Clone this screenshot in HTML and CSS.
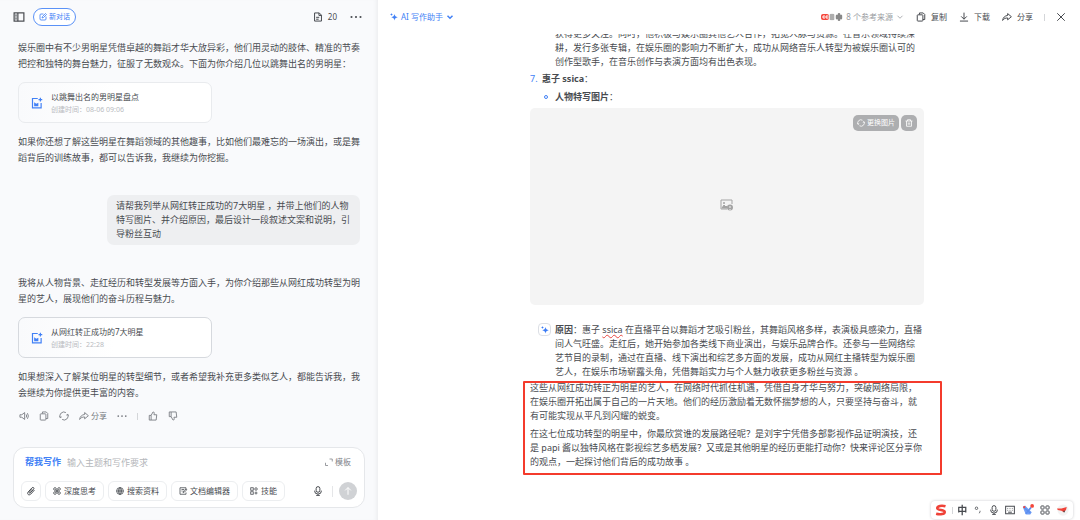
FILE: index.html
```html
<!DOCTYPE html>
<html lang="zh-CN">
<head>
<meta charset="utf-8">
<title>AI 写作助手</title>
<link rel="stylesheet" href="styles.css">
</head>
<body>
<svg class="sprite" aria-hidden="true">
  <symbol id="copy" viewBox="0 0 16 16"><rect x="2" y="4.500" width="9" height="10" rx="1"/><path d="M5.500 4V1.500h6L14 4v8h-3"/></symbol>
  <symbol id="share" viewBox="0 0 16 16"><path d="M9 2.500l6 5-6 5V9.500C5.500 9.500 3 10.500 1 13.500 1.500 9 4.500 6 9 5.500z"/></symbol>
  <symbol id="dots" viewBox="0 0 16 16"><g fill="currentColor" stroke="none"><circle cx="2" cy="8" r="1.400"/><circle cx="8" cy="8" r="1.400"/><circle cx="14" cy="8" r="1.400"/></g></symbol>
  <symbol id="refresh" viewBox="0 0 16 16"><path d="M2 10.500a6.300 6.300 0 0 1 9-8M14 5.500a6.300 6.300 0 0 1-9 8M.5 8.500l1.500 2.200 2.300-1.300M15.500 7.500L14 5.300l-2.300 1.300"/></symbol>
  <symbol id="mic" viewBox="0 0 16 16"><rect x="5" y="1" width="6" height="9" rx="3"/><path d="M2.500 7.500a5.500 5.500 0 0 0 11 0M8 13v2.500M5 15.500h6"/></symbol>
  <symbol id="down" viewBox="0 0 16 16"><path d="M3 5.500l5 5 5-5"/></symbol>
  <symbol id="sparkle" viewBox="0 0 16 16"><path fill="currentColor" stroke="none" d="M9 2c.8 4 2.200 5.400 6.500 6.500C11.200 9.500 9.800 11 9 15c-.8-4-2.200-5.500-6.500-6.500C6.800 7.400 8.200 6 9 2zM3 0c.3 1.900 1 2.600 3 3-2 .4-2.700 1.100-3 3-.3-1.900-1-2.600-3-3 2-.4 2.700-1.100 3-3z"/></symbol>
  <symbol id="docadd" viewBox="0 0 16 16"><path d="M9 2H2v12.500h11.500V8M5 11.500V8.500l2 1.500 2-1v2.500z"/><path d="M12.500 1v5M10 3.500h5"/></symbol>
</svg>
<main class="app">
  <section class="chat">
    <header class="bar">
      <button class="plain" aria-label="侧边栏"><svg class="i12" viewBox="0 0 16 16"><rect x="1.500" y="2.500" width="13" height="11"/><path d="M6.500 2.500v11M3 5.500h2M3 8h2M3 10.500h2"/></svg></button>
      <button class="new"><svg class="i8" viewBox="0 0 16 16"><path d="M9 2H4a2 2 0 0 0-2 2v8a2 2 0 0 0 2 2h8a2 2 0 0 0 2-2V7M6 10l1-3 6-6 2 2-6 6z"/></svg>新对话</button>
      <span class="grow"></span>
      <button class="plain count"><svg class="i10" viewBox="0 0 16 16"><path d="M2.500 1.500h7.500l3.500 3.500v9.500h-11zM9.500 1.500v4h4M5 8.500h5M5 11.500h4"/></svg>20</button>
      <button class="plain" aria-label="更多"><svg class="i12"><use href="#dots"/></svg></button>
    </header>
    <div class="messages">
      <p>娱乐圈中有不少男明星凭借卓越的舞蹈才华大放异彩，他们用灵动的肢体、精准的节奏<br>把控和独特的舞台魅力，征服了无数观众。下面为你介绍几位以跳舞出名的男明星：</p>
      <a class="card" href="#"><svg class="i12 blue"><use href="#docadd"/></svg><span><b>以跳舞出名的男明星盘点</b><small>创建时间：08-06 09:06</small></span></a>
      <p>如果你还想了解这些明星在舞蹈领域的其他趣事，比如他们最难忘的一场演出，或是舞<br>蹈背后的训练故事，都可以告诉我，我继续为你挖掘。</p>
      <p class="bubble">请帮我列举从网红转正成功的7大明星 ，并带上他们的人物<br>特写图片、并介绍原因，最后设计一段叙述文案和说明，引<br>导粉丝互动</p>
      <p>我将从人物背景、走红经历和转型发展等方面入手，为你介绍那些从网红成功转型为明<br>星的艺人，展现他们的奋斗历程与魅力。</p>
      <a class="card active" href="#"><svg class="i12 blue"><use href="#docadd"/></svg><span><b>从网红转正成功的7大明星</b><small>创建时间：22:28</small></span></a>
      <p>如果想深入了解某位明星的转型细节，或者希望我补充更多类似艺人，都能告诉我，我<br>会继续为你提供更丰富的内容。</p>
      <div class="actions">
        <button class="plain" aria-label="朗读"><svg class="i10" viewBox="0 0 16 16"><path d="M1.500 6v4h3L9 13.500v-11L4.500 6zM11.500 5.500q1.500 2.500 0 5M13.500 3.500q3 4.500 0 9"/></svg></button>
        <button class="plain" aria-label="复制"><svg class="i10"><use href="#copy"/></svg></button>
        <button class="plain" aria-label="重新生成"><svg class="i10"><use href="#refresh"/></svg></button>
        <button class="plain tight"><svg class="i10"><use href="#share"/></svg>分享</button>
        <button class="plain" aria-label="更多"><svg class="i10"><use href="#dots"/></svg></button>
        <i class="rule"></i>
        <button class="plain" aria-label="赞"><svg class="i10" viewBox="0 0 16 16"><path d="M2 7h3v7.500H2zM5 7l3-5.500c2 0 2.500 1.500 1.500 4.500H14l-1 8.500H5"/></svg></button>
        <button class="plain" aria-label="踩"><svg class="i10" viewBox="0 0 16 16"><path d="M2 1.500h3V9H2zM5 9l3 5.500c2 0 2.500-1.500 1.500-4.500H14l-1-8.500H5"/></svg></button>
      </div>
    </div>
    <form class="composer">
      <div class="prompt">
        <label for="topic">帮我写作</label>
        <input id="topic" placeholder="输入主题和写作要求">
        <button type="button" class="plain tight"><svg class="i8" viewBox="0 0 16 16"><path d="M9 2h5.500v5M1 9.500V15h5"/></svg>模板</button>
      </div>
      <div class="tools">
        <button type="button" class="clip" aria-label="附件"><svg class="i10" viewBox="0 0 16 16"><path d="M13.500 6.500l-6 6.500c-3 3-6.500-.5-4-3.500l6-6.500c2-2 4.500.5 2.500 2.500L6.500 11c-1 1-2-.2-1.200-1.200L10 5"/></svg></button>
        <button type="button"><svg class="i8" viewBox="0 0 16 16"><circle cx="4" cy="4" r="2.700"/><circle cx="12" cy="4" r="2.700"/><circle cx="4" cy="12" r="2.700"/><circle cx="12" cy="12" r="2.700"/><path d="M5 5l6 6M11 5l-6 6"/></svg>深度思考</button>
        <button type="button"><svg class="i8" viewBox="0 0 16 16"><circle cx="8" cy="8" r="6.800"/><ellipse cx="8" cy="8" rx="3" ry="6.800"/><path d="M1 8h14M8 1v14"/></svg>搜索资料</button>
        <button type="button"><svg class="i8" viewBox="0 0 16 16"><path d="M14 5V1.500H2v13h12V11M5 5h5M5 8h2M8 11l1-3 5-4 1.500 1.500L11 10z"/></svg>文档编辑器</button>
        <button type="button"><svg class="i8" viewBox="0 0 16 16"><rect x="1.500" y="1.500" width="5" height="5"/><circle cx="12" cy="4" r="2.500"/><rect x="1.500" y="9.500" width="5" height="5"/><path d="M12 9v6M9 12h6"/></svg>技能</button>
        <span class="grow"></span>
        <button type="button" class="plain" aria-label="语音"><svg class="i10"><use href="#mic"/></svg></button>
        <i class="rule"></i>
        <button type="button" class="send" aria-label="发送"><svg class="i10" viewBox="0 0 16 16"><path d="M8 14V2.500M3.500 7L8 2.500 12.500 7"/></svg></button>
      </div>
    </form>
  </section>

  <section class="doc">
    <header class="bar">
      <button class="plain blue assistant"><svg class="i8"><use href="#sparkle"/></svg>AI 写作助手<svg class="i8 thick"><use href="#down"/></svg></button>
      <span class="grow"></span>
      <button class="plain sources"><svg class="favs" viewBox="0 0 22 8"><rect y="1" width="8" height="6" rx="2" fill="#f5463b" stroke="none"/><path d="M4 3H2v2h2M7 3H5v2h2" stroke="#fff"/><circle cx="11" cy="4" r="3.500" fill="#e5e5e5" stroke="none"/><path d="M9 2h4M9 4h4M9 6h4" stroke="#777"/><circle cx="18" cy="4" r="3.500" fill="#ccc" stroke="none"/><path d="M18 0v8M16 2v4M20 2v4" stroke="#444"/></svg>8 个参考来源<svg class="i8"><use href="#down"/></svg></button>
      <button class="plain"><svg class="i10"><use href="#copy"/></svg>复制</button>
      <button class="plain"><svg class="i10" viewBox="0 0 16 16"><path d="M8 1v10.500M3.500 7L8 11.500 12.500 7M1.500 14.500h13"/></svg>下载</button>
      <button class="plain"><svg class="i10"><use href="#share"/></svg>分享</button>
      <i class="rule"></i>
      <button class="plain close" aria-label="关闭"><svg class="i10" viewBox="0 0 16 16"><path d="M2 2l12 12M14 2L2 14"/></svg></button>
    </header>
    <div class="scroll">
      <article class="page">
        <p class="inner first">获得更多关注。同时，他积极与娱乐圈其他艺人合作，拓宽人脉与资源。在音乐领域持续深<br>耕，发行多张专辑，在娱乐圈的影响力不断扩大，成功从网络音乐人转型为被娱乐圈认可的<br>创作型歌手，在音乐创作与表演方面均有出色表现。</p>
        <h2><span class="num">7.</span><span><b>惠子 ssica</b>：</span></h2>
        <h3><i class="bullet"></i><span><b>人物特写图片</b>：</span></h3>
        <figure>
          <div class="overlay"><button><svg class="i8"><use href="#refresh"/></svg>更换图片</button><button aria-label="删除"><svg class="i8" viewBox="0 0 16 16"><path d="M1 4h14M5 4V1.500h6V4M3 4v10.500h10V4M6.500 7v4.500M9.500 7v4.500"/></svg></button></div>
          <svg class="missing" viewBox="0 0 14 12"><path d="M7 10H1V1h11v4"/><path d="M2 9l2-3 2 2 1-1v2z" fill="currentColor"/><circle cx="4" cy="4" r="1" fill="currentColor" stroke="none"/><circle cx="10" cy="8.500" r="3" fill="currentColor" stroke="none"/><path d="M10 7v2M10 10v1" stroke="#f4f4f4"/></svg>
        </figure>
        <div class="reason">
          <button class="spark" aria-label="AI 编辑"><svg class="i8"><use href="#sparkle"/></svg></button>
          <p><b>原因</b>：惠子 <span class="typo">ssica</span> 在直播平台以舞蹈才艺吸引粉丝，其舞蹈风格多样，表演极具感染力，直播<br>间人气旺盛。走红后，她开始参加各类线下商业演出，与娱乐品牌合作。还参与一些网络综<br>艺节目的录制，通过在直播、线下演出和综艺多方面的发展，成功从网红主播转型为娱乐圈<br>艺人，在娱乐市场崭露头角，凭借舞蹈实力与个人魅力收获更多粉丝与资源 。</p>
        </div>
        <section class="marked">
          <p>这些从网红成功转正为明星的艺人，在网络时代抓住机遇，凭借自身才华与努力，突破网络局限，<br>在娱乐圈开拓出属于自己的一片天地。他们的经历激励着无数怀揣梦想的人，只要坚持与奋斗，就<br>有可能实现从平凡到闪耀的蜕变。</p>
          <p>在这七位成功转型的明星中，你最欣赏谁的发展路径呢？是刘宇宁凭借多部影视作品证明演技，还<br>是 papi 酱以独特风格在影视综艺多栖发展？又或是其他明星的经历更能打动你？快来评论区分享你<br>的观点，一起探讨他们背后的成功故事 。</p>
        </section>
      </article>
    </div>
  </section>
</main>
<aside class="ime">
  <svg class="i12 logo" viewBox="0 0 16 16"><path d="M14 3C9 1.500 3 2.500 3 5.500S13 7.500 13 10.500 7 14.500 1.500 13"/></svg>
  <i class="rule"></i>
  <span class="zh">中</span>
  <svg class="i8" viewBox="0 0 16 16"><circle cx="5" cy="4.500" r="2.500"/><path d="M12 9.500v2l-1.500 3"/></svg>
  <svg class="i10"><use href="#mic"/></svg>
  <svg class="i10" viewBox="0 0 16 16"><rect x="1" y="2" width="14" height="12"/><path d="M4 5.500h1M7.500 5.500h1M11 5.500h1M4 8.500h1M7.500 8.500h1M11 8.500h1M5 11.500h6"/></svg>
  <svg class="i12" viewBox="0 0 16 16"><path d="M1 4l3-2 9 9-2 3H6l-2-2 7-8 2 1-8 9z" fill="#6f9df5" stroke="none"/><path d="M2 4l9 8M12 5l-7 8" stroke="#5c8fee"/><circle cx="13.500" cy="2.500" r="2.500" fill="#f4463a" stroke="none"/><circle cx="3" cy="4" r="1.500" fill="#f4463a" stroke="none"/></svg>
  <svg class="i10" viewBox="0 0 16 16"><rect x="1.500" y="1.500" width="5" height="5" rx="1"/><rect x="9.500" y="1.500" width="5" height="5" rx="1"/><rect x="1.500" y="9.500" width="5" height="5" rx="1"/><rect x="9.500" y="9.500" width="5" height="5" rx="1"/></svg>
  <svg class="i12" viewBox="0 0 16 16"><circle cx="8" cy="8" r="7.500" fill="#f3f3f3" stroke="none"/><path d="M0 6l6 0 7-2-1 4-3 3-3-2-5-1z" fill="#ef4238" stroke="none"/><path d="M9 9l1 2" stroke="#444"/></svg>
</aside>
</body>
</html>
```
FILE: styles.css
```css
* { box-sizing: border-box; }
body {
  margin: 0;
  font: 9px/14px "Noto Sans", "Noto Sans CJK SC", sans-serif;
  color: #484b50;
  background: #fff;
  text-spacing-trim: space-all;
}
p, h2, h3, figure { margin: 0; }
p { white-space: nowrap; }
button, input { font: inherit; color: inherit; }
button {
  display: flex;
  align-items: center;
  justify-content: center;
  gap: 3px;
  padding: 0;
  white-space: nowrap;
}
svg { flex: none; display: block; fill: none; stroke: currentColor; stroke-width: 1.6; overflow: visible; }
.sprite { position: absolute; width: 0; height: 0; }
.i8 { width: 8px; height: 8px; }
.i10 { width: 10px; height: 10px; }
.i12 { width: 12px; height: 12px; }
.thick { stroke-width: 3; }
.blue, .blue svg { color: #4281f6; }
.plain { border: 0; background: none; font-size: 8px; gap: 5px; }
.plain.tight { gap: 2px; }
.grow { flex: 1; }
.rule { width: 1px; height: 7px; background: #d4d6d9; }

.app { display: grid; grid-template-columns: 35fr 65fr; height: 100vh; }
.bar { display: flex; align-items: center; height: 34px; flex: none; }

.chat {
  display: flex;
  flex-direction: column;
  min-width: 0;
  background: #f9fafc;
  box-shadow: inset -4px 0 4px -3px #e9eaec;
}
.chat .bar { padding: 0 16px 0 13px; }
.new {
  width: 43px;
  height: 18px;
  margin-left: 8px;
  gap: 2px;
  font-size: 7px;
  color: #3b7cf6;
  border: 1px solid #5b92f7;
  border-radius: 9px;
  background: #fff;
}
.plain.count { margin-right: 13px; }
.messages { flex: 1; display: flex; flex-direction: column; align-items: flex-start; padding: 6px 18px 0; }
.messages p { line-height: 16px; }
.messages .card {
  display: flex;
  align-items: center;
  gap: 8px;
  width: 194px;
  height: 41px;
  margin: 10px 0 11px;
  padding: 0 12px;
  color: inherit;
  text-decoration: none;
  border: 1px solid #e9ebee;
  border-radius: 7px;
  background: linear-gradient(90deg, #f9fafc, #fff 50%);
}
.messages .card.active { border-color: #d6d9de; }
.card b, .card small { display: block; font-weight: 400; font-size: 8px; line-height: 13px; }
.card small { font-size: 7px; color: #b9bbbf; }
.messages .bubble {
  align-self: flex-end;
  min-width: 253px;
  margin: 29px 0 30px;
  padding: 4px 9px;
  line-height: 14px;
  border-radius: 7px;
  background: #eeeff1;
}
.actions { display: flex; align-items: center; gap: 10px; padding: 8px 1px; color: #777a80; }
.actions svg { stroke-width: 1.4; }
.composer {
  margin: 0 13px 12px;
  padding: 6px 7px;
  border: 1px solid #e5e7ea;
  border-radius: 12px;
  background: #fff;
}
.prompt { display: flex; align-items: center; gap: 6px; padding: 0 6px 0 4px; }
.prompt label { font-weight: 700; color: #4281f6; }
.prompt input { flex: 1; min-width: 0; height: 16px; padding: 0; border: 0; outline: 0; background: none; }
.prompt input::placeholder { color: #b5b7bb; }
.prompt button { color: #808389; }
.tools { display: flex; align-items: center; gap: 4px; margin-top: 11px; }
.tools button:not(.plain, .send) {
  height: 20px;
  padding: 0 7px;
  font-size: 8px;
  border: 1px solid #eceef0;
  border-radius: 6px;
  background: #fff;
}
.tools button.clip:not(.plain) { padding: 0 4px; }
.tools .rule { height: 11px; margin: 0 2px 0 5px; background: #e5e6e8; }
.tools .send { width: 18px; height: 18px; color: #fff; border: 0; border-radius: 50%; background: #d0d2d5; }

.doc { display: flex; flex-direction: column; min-width: 0; }
.doc .bar { padding: 0 14px 0 12px; gap: 12px; }
.plain.assistant { gap: 3px; }
.plain.sources { gap: 3px; color: #999ca1; }
.favs { width: 22px; height: 8px; stroke-width: 1; }
.doc .bar .rule { margin: 0 -1px; }
.scroll { flex: 1; min-height: 0; overflow: hidden; padding: 0 12px 0 8px; }
.page { max-width: 394px; margin: -7px auto 0; }
.inner { padding-left: 25px; }
h2, h3 { display: flex; align-items: center; font-size: 9px; font-weight: 400; }
h2 { margin-top: 3px; }
h3 { margin: 4px 0; padding-left: 14px; }
.num { width: 12px; color: #4281f6; }
.bullet { width: 4px; height: 4px; margin-right: 7px; border: 1px solid #4281f6; border-radius: 50%; }
figure {
  position: relative;
  display: grid;
  place-items: center;
  aspect-ratio: 2;
  padding-bottom: 3px;
  border-radius: 5px;
  background: #f4f4f4;
  color: #a4a4a4;
}
.missing { width: 14px; height: 12px; stroke-width: 1; }
.overlay { position: absolute; top: 7px; right: 7px; display: flex; gap: 2px; }
.overlay button {
  height: 16px;
  padding: 0 4px;
  gap: 2px;
  font-size: 7px;
  color: #fff;
  border: 0;
  border-radius: 5px;
  background: #adaeb0;
}
.reason { display: flex; align-items: flex-start; gap: 4px; margin-top: 18px; padding-left: 8px; }
.spark { width: 13px; height: 13px; flex: none; color: #3b7cf6; border: 1px solid #dcdfe5; border-radius: 4px; background: #fff; }
.typo { text-decoration: underline wavy #e8473f 1px; text-underline-offset: 1px; }
.marked { position: relative; margin-top: 2px; }
.marked p + p { margin-top: 4px; }
.marked::after {
  content: "";
  position: absolute;
  inset: 0 -18px -6px -7px;
  border: 2px solid #f43b2c;
  border-radius: 1px;
}

.ime {
  position: fixed;
  right: 7px;
  bottom: 1px;
  display: flex;
  align-items: center;
  justify-content: space-between;
  width: 142px;
  height: 18px;
  padding: 0 4px;
  border-radius: 4px;
  background: #fff;
  box-shadow: 0 0 3px #c8cace;
}
.ime .rule { margin: 0 -2px; }
.logo { color: #ef4238; stroke-width: 3.4; }
.zh { font-weight: 700; font-size: 10px; }
```
